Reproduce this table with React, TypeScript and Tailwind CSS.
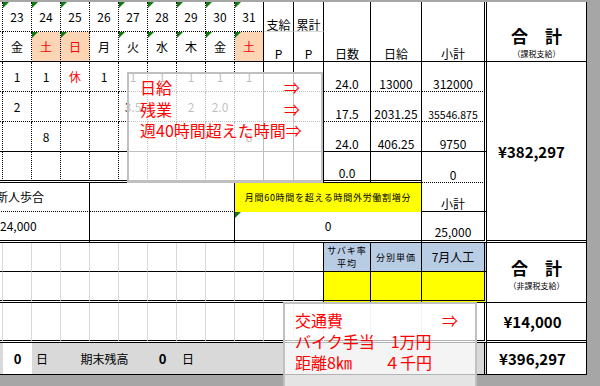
import { Fragment } from 'react';

// border helpers, one side each, so a cell can mix styles like Excel does
const R_DOT = 'border-r [border-right-style:dotted]!';
const R_SOL = 'border-r';
const R_DBL = 'border-r-[3px] [border-right-style:double]!';
const R_GRID = 'border-r border-r-[#d9d9d9]';
const B_DOT = 'border-b [border-bottom-style:dotted]!';
const B_SOL = 'border-b';
const B_DBL = 'border-b-[3px] [border-bottom-style:double]!';
const B_GRAY = 'border-b border-b-[#d9d9d9]';

const DAYS = [
  { d: '23', w: '金', off: false, tri: true, wTri: false },
  { d: '24', w: '土', off: true, tri: true, wTri: true },
  { d: '25', w: '日', off: true, tri: true, wTri: true },
  { d: '26', w: '月', off: false, tri: false, wTri: false },
  { d: '27', w: '火', off: false, tri: true, wTri: true },
  { d: '28', w: '水', off: false, tri: true, wTri: true },
  { d: '29', w: '木', off: false, tri: true, wTri: true },
  { d: '30', w: '金', off: false, tri: true, wTri: true },
  { d: '31', w: '土', off: true, tri: true, wTri: true },
];

const DATA = [
  { days: ['1', '1', '休', '1', '1', '1', '1', '1', '1'], n: '24.0', rate: '13000', sub: '312000', b: B_DOT, ob: B_DOT },
  { days: ['2', '', '', '', '3.5', '', '2', '2.0', ''], n: '17.5', rate: '2031.25', sub: '35546.875', b: B_DOT, ob: B_DOT },
  { days: ['', '8', '', '', '', '', '', '', '8'], n: '24.0', rate: '406.25', sub: '9750', b: B_SOL, ob: B_SOL },
  { days: ['', '', '', '', '', '', '', '', ''], n: '0.0', rate: '', sub: '0', b: B_DBL, ob: B_DOT },
];

const GRID12 = Array.from({ length: 12 }, (_, i) => i);
const GRID14 = Array.from({ length: 14 }, (_, i) => i);

function Tri() {
  return <span className="absolute left-0 top-0 h-0 w-0 border-t-[6px] border-r-[6px] border-t-[#0f7a0f] border-r-transparent" />;
}

export default function App() {
  return (
    <div className="relative h-[386px] w-[600px] overflow-hidden bg-[#a6a6a6] text-black font-['Noto_Sans_CJK_JP',sans-serif]">
      <div className="ml-[-17px] mt-[2px] grid w-max grid-cols-[20px_repeat(9,29px)_30px_30px_47px_51px_65px_100px] grid-rows-[30px_30px_30px_30px_30px_31px_29px_31px_29px_31px_40px_32px] bg-white text-[12px] leading-none">
        {/* row 1: dates */}
        <div className={`${R_DOT} ${B_DOT}`} />
        {DAYS.map((d, i) => (
          <div key={d.d} className={`relative flex items-center justify-center ${i === 8 ? R_SOL : R_DOT} ${B_DOT}`}>
            {d.tri && <Tri />}
            {d.d}
          </div>
        ))}
        <div className={`flex items-end justify-center pb-0 ${R_SOL} ${B_GRAY}`}>支給</div>
        <div className={`flex items-end justify-center pb-0 ${R_SOL} ${B_GRAY}`}>累計</div>
        <div className={`row-span-2 flex items-end justify-center pb-[1px] ${R_SOL} ${B_SOL}`}>日数</div>
        <div className={`row-span-2 flex items-end justify-center pb-[1px] ${R_SOL} ${B_SOL}`}>日給</div>
        <div className={`row-span-2 flex items-end justify-center pb-[1px] ${R_DBL} ${B_SOL}`}>小計</div>
        <div className={`row-span-2 flex flex-col items-center justify-end pb-[3px] ${R_SOL} ${B_SOL}`}>
          <div className="text-[17px] font-bold">合　計</div>
          <div className="mt-[6px] text-[8px]">（課税支給）</div>
        </div>

        {/* row 2: weekdays */}
        <div className={`${R_DOT} ${B_SOL}`} />
        {DAYS.map((d, i) => (
          <div
            key={d.d}
            className={`relative flex items-center justify-center ${d.off ? 'bg-[#fcd5b4]' : ''} ${i === 8 ? R_SOL : R_DOT} ${B_SOL}`}
          >
            {d.wTri && <Tri />}
            <span className={d.off ? 'text-[#ff0000]' : ''}>{d.w}</span>
          </div>
        ))}
        <div className={`flex items-end justify-center pb-[1px] ${R_SOL} ${B_SOL}`}>P</div>
        <div className={`flex items-end justify-center pb-[1px] ${R_SOL} ${B_SOL}`}>P</div>

        {/* rows 3-6: daily values */}
        {DATA.map((row, r) => (
          <Fragment key={r}>
            <div className={`${R_DOT} ${row.b}`} />
            {row.days.map((v, i) => (
              <div key={i} className={`flex items-center justify-center ${i === 8 ? R_SOL : R_DOT} ${row.b}`}>
                <span className={v === '休' ? 'text-[#ff0000]' : ''}>{v}</span>
              </div>
            ))}
            <div className={`${R_SOL} ${row.b}`} />
            <div className={`${R_SOL} ${row.b}`} />
            <div className={`flex items-end justify-center pb-[1px] ${R_SOL} ${row.b}`}>{row.n}</div>
            <div className={`flex items-end justify-center pb-[1px] ${R_SOL} ${row.b}`}>{row.rate}</div>
            <div className={`flex items-end justify-center pb-[1px] ${row.sub.length > 7 ? 'text-[10.5px]' : ''} ${R_DBL} ${row.ob}`}>
              {row.sub}
            </div>
            {r === 0 && (
              <div className={`row-span-6 flex items-center justify-center pr-[10px] text-[15px] font-bold ${R_SOL} ${B_DBL}`}>
                ¥382,297
              </div>
            )}
          </Fragment>
        ))}

        {/* row 7 */}
        <div className={`col-span-4 flex items-center pl-[13px] ${R_SOL} ${B_DOT}`}>新人歩合</div>
        <div className={`col-span-5 ${R_SOL} ${B_DOT}`} />
        <div className={`col-span-5 flex items-center justify-center bg-[#ffff00] text-[9px] tracking-[0.7px] ${R_SOL}`}>
          月間60時間を超える時間外労働割増分
        </div>
        <div className={`flex items-end justify-center pb-[1px] ${R_DBL} ${B_SOL}`}>小計</div>

        {/* row 8 */}
        <div className={`col-span-4 flex items-center pl-[17px] ${R_SOL} ${B_DBL}`}>24,000</div>
        <div className={`col-span-5 ${R_SOL} ${B_DBL}`} />
        <div className={`relative col-span-5 flex items-center justify-center ${R_SOL} ${B_DBL}`}>
          <Tri />0
        </div>
        <div className={`flex items-end justify-center pb-[2px] ${R_DBL} ${B_DBL}`}>25,000</div>

        {/* row 9 */}
        {GRID12.map((i) => (
          <div key={i} className={`${i === 11 ? R_SOL : R_GRID} ${B_SOL}`} />
        ))}
        <div className={`flex flex-col items-center justify-center bg-[#b8cce4] text-[9px] leading-[13px] tracking-[1px] ${R_SOL} ${B_SOL}`}>
          <span>サバキ率</span>
          <span>平均</span>
        </div>
        <div className={`flex items-center justify-center bg-[#b8cce4] text-[9px] tracking-[1px] ${R_SOL} ${B_SOL}`}>分別単価</div>
        <div className={`flex items-center justify-center bg-[#b8cce4] ${R_DBL} ${B_SOL}`}>7月人工</div>
        <div className={`row-span-2 flex flex-col items-center justify-center pt-[3px] ${R_SOL} ${B_SOL}`}>
          <div className="text-[17px] font-bold">合　計</div>
          <div className="mt-[6px] text-[8px]">（非課税支給）</div>
        </div>

        {/* row 10 */}
        {GRID12.map((i) => (
          <div key={i} className={`${i === 11 ? R_SOL : R_GRID} ${B_DBL}`} />
        ))}
        <div className={`bg-[#ffff00] ${R_SOL} ${B_DBL}`} />
        <div className={`bg-[#ffff00] ${R_SOL} ${B_DBL}`} />
        <div className={`bg-[#ffff00] ${R_DBL} ${B_DBL}`} />

        {/* row 11 */}
        {GRID14.map((i) => (
          <div key={i} className={`${R_GRID} ${B_DBL}`} />
        ))}
        <div className={`${R_DBL} ${B_DBL}`} />
        <div className={`flex items-center justify-center pr-[8px] text-[15px] font-bold ${R_SOL} ${B_DBL}`}>¥14,000</div>

        {/* row 12: balance band */}
        <div className={`bg-[#d9d9d9] ${B_SOL}`} />
        <div className={`flex items-center justify-center bg-white text-[13px] font-bold ${B_SOL}`}>0</div>
        <div className={`flex items-center bg-[#d9d9d9] pl-[4px] ${B_SOL}`}>日</div>
        <div className={`col-span-3 flex items-center justify-center bg-[#d9d9d9] ${B_SOL}`}>期末残高</div>
        <div className={`flex items-center justify-center bg-[#d9d9d9] text-[13px] font-bold ${B_SOL}`}>0</div>
        <div className={`flex items-center bg-[#d9d9d9] pl-[5px] ${B_SOL}`}>日</div>
        <div className={`col-span-6 bg-[#d9d9d9] ${B_SOL}`} />
        <div className={`bg-[#d9d9d9] ${R_DBL} ${B_SOL}`} />
        <div className={`flex items-center justify-center pr-[8px] text-[15px] font-bold ${R_SOL} ${B_SOL}`}>¥396,297</div>
      </div>

      {/* cell comments floating over the sheet */}
      <div className="absolute left-[127px] top-[72px] h-[111px] w-[196px] border-2 border-[#c0c0c0] bg-white/75 pl-[11px] pt-[3px] text-[16px] leading-[21.5px] text-[#ff0000]">
        <div className="flex w-[160px] justify-between">
          <span>日給</span>
          <span>⇒</span>
        </div>
        <div className="flex w-[160px] justify-between">
          <span>残業</span>
          <span>⇒</span>
        </div>
        <div>週40時間超えた時間⇒</div>
      </div>

      <div className="absolute left-[283px] top-[302px] h-[100px] w-[194px] border-2 border-[#c0c0c0] bg-white/70 pl-[10px] pt-[6px] text-[16px] leading-[21px] text-[#ff0000]">
        <div className="flex w-[163px] justify-between">
          <span>交通費</span>
          <span>⇒</span>
        </div>
        <div>バイク手当　1万円</div>
        <div>距離8㎞　　４千円</div>
      </div>
    </div>
  );
}
